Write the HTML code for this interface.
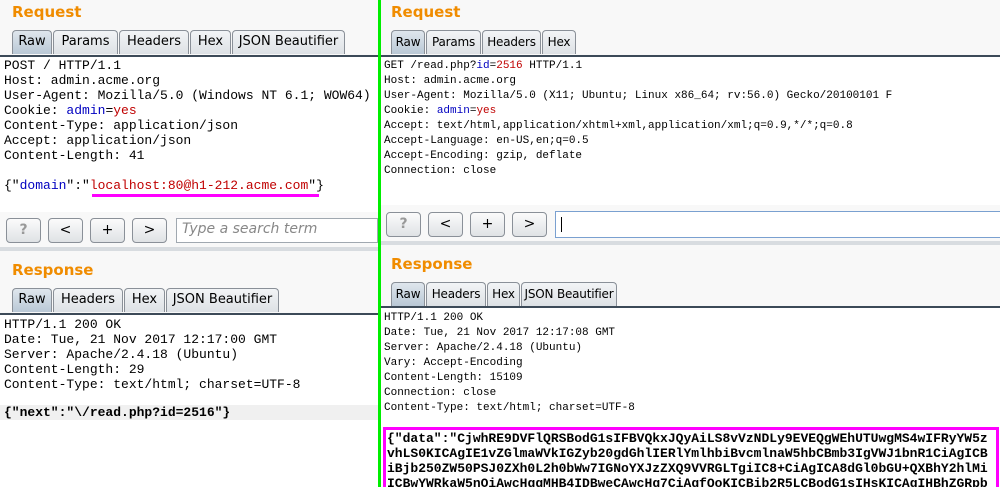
<!DOCTYPE html>
<html><head><meta charset="utf-8"><style>
*{margin:0;padding:0;box-sizing:border-box}
body{width:1000px;height:487px;overflow:hidden;background:#f8f8f8;position:relative;font-family:"DejaVu Sans","Liberation Sans",sans-serif}
.a{position:absolute}
.title{position:absolute;color:#f08c00;font-weight:bold;font-size:15px}
.tabs{position:absolute;height:24px;display:flex}
.tab{height:24px;border:1px solid #8a9098;border-bottom:none;border-radius:4px 4px 0 0;background:linear-gradient(#f2f4f6,#dde1e5);color:#000;padding-top:3px;margin-right:1px;white-space:nowrap;text-align:center;overflow:hidden}
.L .tab{font-size:13px;padding-top:3px}
.R .tab{font-size:12px;padding-top:4px;letter-spacing:-0.2px}
.tab.sel{background:linear-gradient(#dfe6ed,#b9c8d6)}
.line{position:absolute;height:2px;background:#3c4a58}
.pre{position:absolute;font-family:"Liberation Mono",monospace;white-space:pre;color:#000;background:#fff;overflow:hidden}
.btn{position:absolute;height:25px;border:1px solid #8a9098;border-radius:4px;background:linear-gradient(#fbfbfb,#dfe2e5);font-size:14px;text-align:center;line-height:22px;width:35px}
.sep{position:absolute;height:4px;background:#d8dce0}
.b{color:#0000c0}.r{color:#c00000}
</style></head><body>
<!-- LEFT -->
<div class="title" style="left:12px;top:3px">Request</div>
<div class="tabs L" style="left:12px;top:30px"><div class="tab sel" style="width:40px">Raw</div><div class="tab" style="width:65px">Params</div><div class="tab" style="width:70px">Headers</div><div class="tab" style="width:41px">Hex</div><div class="tab" style="width:113px">JSON Beautifier</div></div>
<div class="line" style="left:0;top:55px;width:378px"></div>
<div class="pre" style="left:0;top:57px;width:378px;height:155px;font-size:13px;line-height:15px;padding:1px 4px">POST / HTTP/1.1
Host: admin.acme.org
User-Agent: Mozilla/5.0 (Windows NT 6.1; WOW64)
Cookie: <span class="b">admin</span>=<span class="r">yes</span>
Content-Type: application/json
Accept: application/json
Content-Length: 41

{"<span class="b">domain</span>":"<span class="r">localhost:80@h1-212.acme.com</span>"}</div>
<div class="a" style="left:92px;top:194px;width:227px;height:3px;background:#ff00ff"></div>
<div class="btn" style="left:6px;top:218px;color:#999;font-weight:bold">?</div>
<div class="btn" style="left:48px;top:218px">&lt;</div>
<div class="btn" style="left:90px;top:218px">+</div>
<div class="btn" style="left:132px;top:218px">&gt;</div>
<div class="a" style="left:176px;top:218px;width:202px;height:25px;background:#fff;border:1px solid #a0a8b0;font-style:italic;color:#888;font-size:14px;padding:2px 5px">Type a search term</div>
<div class="sep" style="left:0;top:247px;width:378px"></div>
<div class="title" style="left:12px;top:261px">Response</div>
<div class="tabs L" style="left:12px;top:288px"><div class="tab sel" style="width:40px">Raw</div><div class="tab" style="width:70px">Headers</div><div class="tab" style="width:41px">Hex</div><div class="tab" style="width:113px">JSON Beautifier</div></div>
<div class="line" style="left:0;top:313px;width:378px"></div>
<div class="pre" style="left:0;top:315px;width:378px;height:172px;font-size:13px;line-height:15px;padding:2px 4px">HTTP/1.1 200 OK
Date: Tue, 21 Nov 2017 12:17:00 GMT
Server: Apache/2.4.18 (Ubuntu)
Content-Length: 29
Content-Type: text/html; charset=UTF-8
</div>
<div class="pre" style="left:0;top:405px;width:378px;height:15px;font-size:13px;line-height:15px;padding:0 4px;background:#f0f0f0;font-weight:bold">{"next":"\/read.php?id=2516"}</div>
<!-- green divider -->
<div class="a" style="left:378px;top:0;width:3px;height:487px;background:#00ee00"></div>
<!-- RIGHT -->
<div class="title" style="left:391px;top:3px">Request</div>
<div class="tabs R" style="left:391px;top:30px"><div class="tab sel" style="width:34px">Raw</div><div class="tab" style="width:55px">Params</div><div class="tab" style="width:59px">Headers</div><div class="tab" style="width:34px">Hex</div></div>
<div class="line" style="left:381px;top:55px;width:619px"></div>
<div class="pre" style="left:381px;top:57px;width:619px;height:148px;font-size:11px;line-height:15px;padding:2px 3px">GET /read.php?<span class="b">id</span>=<span class="r">2516</span> HTTP/1.1
Host: admin.acme.org
User-Agent: Mozilla/5.0 (X11; Ubuntu; Linux x86_64; rv:56.0) Gecko/20100101 F
Cookie: <span class="b">admin</span>=<span class="r">yes</span>
Accept: text/html,application/xhtml+xml,application/xml;q=0.9,*/*;q=0.8
Accept-Language: en-US,en;q=0.5
Accept-Encoding: gzip, deflate
Connection: close</div>
<div class="btn" style="left:386px;top:212px;color:#999;font-weight:bold">?</div>
<div class="btn" style="left:428px;top:212px">&lt;</div>
<div class="btn" style="left:470px;top:212px">+</div>
<div class="btn" style="left:512px;top:212px">&gt;</div>
<div class="a" style="left:555px;top:211px;width:450px;height:27px;background:#fff;border:1px solid #7aa0d0"><div class="a" style="left:5px;top:5px;width:1px;height:15px;background:#000"></div></div>
<div class="sep" style="left:381px;top:241px;width:619px"></div>
<div class="title" style="left:391px;top:255px">Response</div>
<div class="tabs R" style="left:391px;top:282px"><div class="tab sel" style="width:34px">Raw</div><div class="tab" style="width:60px">Headers</div><div class="tab" style="width:33px">Hex</div><div class="tab" style="width:96px">JSON Beautifier</div></div>
<div class="line" style="left:381px;top:306px;width:619px"></div>
<div class="pre" style="left:381px;top:308px;width:619px;height:179px;font-size:11px;line-height:15px;padding:3px 3px">HTTP/1.1 200 OK
Date: Tue, 21 Nov 2017 12:17:08 GMT
Server: Apache/2.4.18 (Ubuntu)
Vary: Accept-Encoding
Content-Length: 15109
Connection: close
Content-Type: text/html; charset=UTF-8
</div>
<div class="pre" style="left:383px;top:427px;width:616px;height:60px;border:3px solid #ff00ff;border-bottom:none;font-weight:bold;font-size:13px;line-height:15px;padding:1px 0 0 1px">{"data":"CjwhRE9DVFlQRSBodG1sIFBVQkxJQyAiLS8vVzNDLy9EVEQgWEhUTUwgMS4wIFRyYW5z
vhLS0KICAgIE1vZGlmaWVkIGZyb20gdGhlIERlYmlhbiBvcmlnaW5hbCBmb3IgVWJ1bnR1CiAgICB
iBjb250ZW50PSJ0ZXh0L2h0bWw7IGNoYXJzZXQ9VVRGLTgiIC8+CiAgICA8dGl0bGU+QXBhY2hlMi
ICBwYWRkaW5nOiAwcHggMHB4IDBweCAwcHg7CiAgfQoKICBib2R5LCBodG1sIHsKICAgIHBhZGRpb</div>
</body></html>
